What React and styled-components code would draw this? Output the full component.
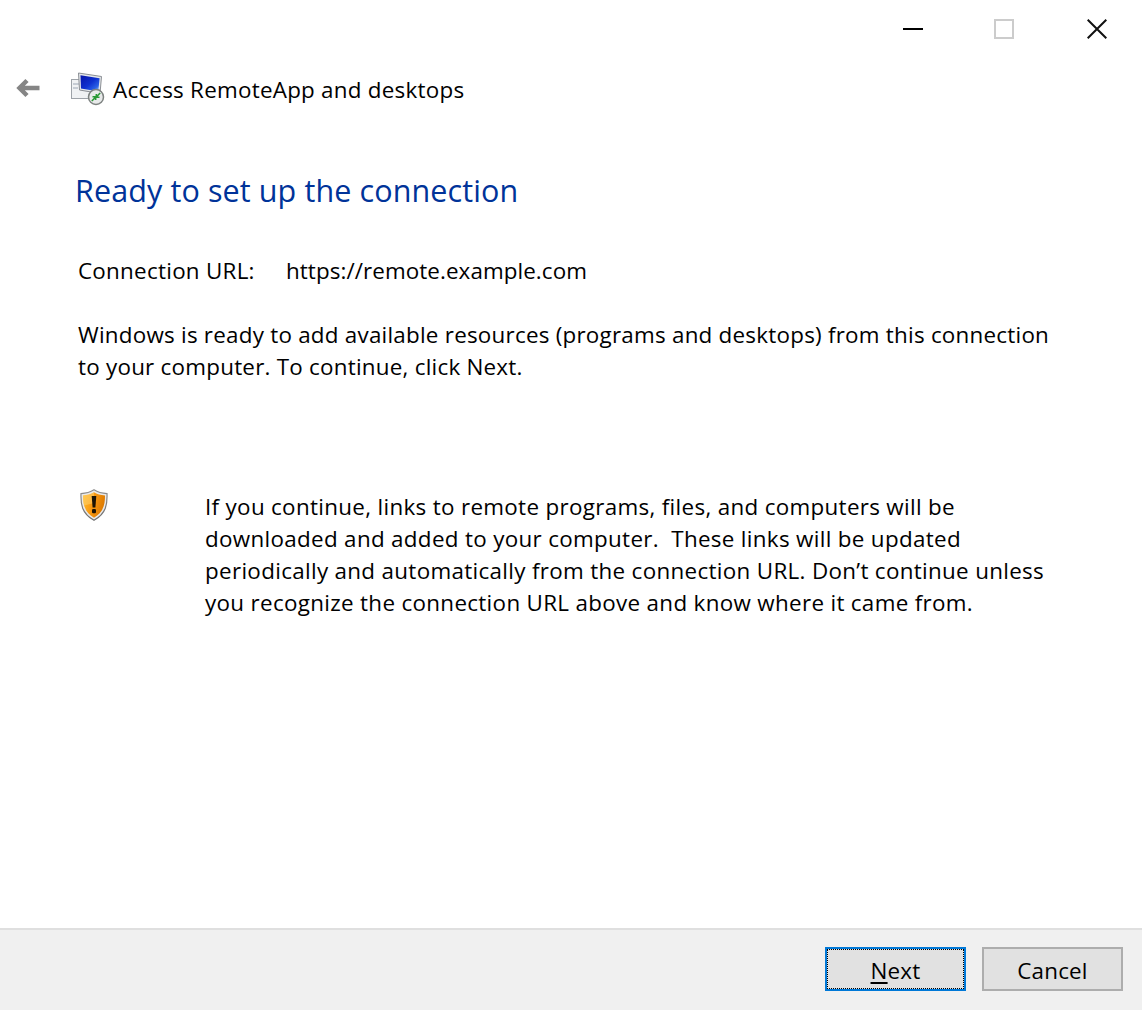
import React from "react";
import styled, { createGlobalStyle } from "styled-components";

const Global = createGlobalStyle`
  html, body { margin: 0; padding: 0; background: #fff; }
  body { font-family: "Open Sans", "Noto Sans", "Liberation Sans", sans-serif; color: #000; }
`;
const Win = styled.div`
  width: 1142px; height: 1010px; display: flex; flex-direction: column; background: #fff; overflow: hidden;
`;
const TitleBar = styled.div`
  height: 60px; display: flex; justify-content: flex-end; align-items: flex-start; padding: 19px 35px 0 0; box-sizing: border-box;
`;
const Caption = styled.svg`
  width: 20px; height: 20px; display: block; flex: none; margin-left: ${p => p.$gap || 0}px;
`;
const NavRow = styled.div`
  height: 60px; display: flex; align-items: center; padding-left: 16px;
`;
const NavTitle = styled.span`
  font-size: 22.4px; letter-spacing: 0.25px; line-height: 30px; margin-left: 7px; color: #000;
`;
const Body = styled.main`
  flex: 1; padding: 51px 0 0 76px; display: flex; flex-direction: column;
`;
const Heading = styled.h1`
  margin: 0 0 0 -1px; font-weight: 400; font-size: 30.5px; letter-spacing: 0.11px; line-height: 38px; color: #003399;
`;
const UrlRow = styled.div`
  margin: 46px 0 0 2px; display: flex; font-size: 22.4px; line-height: 32px;
`;
const UrlLabel = styled.span`
  width: 208px; letter-spacing: 0.27px;
`;
const UrlValue = styled.span`
  letter-spacing: 0.08px;
`;
const Para = styled.p`
  margin: 32px 0 0 2px; width: 990px; font-size: 22.4px; letter-spacing: 0.24px; line-height: 32px;
`;
const Notice = styled.div`
  margin: 108px 0 0 4px; display: flex;
`;
const ShieldIcon = styled.svg`
  width: 28px; height: 32px; flex: none; margin-top: -2px;
`;
const NoticeText = styled.p`
  margin: 0 0 0 97px; width: 850px; font-size: 22.4px; letter-spacing: 0.32px; line-height: 32px; white-space: pre-wrap;
`;
const Footer = styled.footer`
  height: 82px; box-sizing: border-box; flex: none; background: #f0f0f0; border-top: 2px solid #dfdfdf; display: flex; justify-content: flex-end; align-items: flex-start; gap: 16px; padding: 17px 19px 0 0;
`;
const Button = styled.button`
  width: 141px; height: 44px; box-sizing: border-box; background: #e1e1e1; color: #000; font: inherit; font-size: 22.4px; letter-spacing: 0.2px; padding: 3px 0 0; position: relative;
  border: ${p => (p.$primary ? "2px solid #0078d7" : "2px solid #adadad")};
  ${p => p.$primary ? "outline: 1px dotted #000; outline-offset: -3px;" : ""}
  u { text-underline-offset: 3px; }
`;

const Shield = () => (
  <ShieldIcon viewBox="0 0 28 32">
    <defs>
      <linearGradient id="sg" x1="0" y1="0" x2="1" y2="0.3">
        <stop offset="0" stopColor="#ffbe30" />
        <stop offset="0.5" stopColor="#f99a12" />
        <stop offset="1" stopColor="#dd7a02" />
      </linearGradient>
      <linearGradient id="ss" x1="0" y1="0" x2="0" y2="1">
        <stop offset="0" stopColor="#8f8f8f" />
        <stop offset="1" stopColor="#6f6f6f" />
      </linearGradient>
    </defs>
    <path d="M14 .8C10 3.400 6 4.400 1 4.600c-.4 10 .6 20 13 26.600C26.400 24.600 27.400 14.600 27 4.600 22 4.400 18 3.400 14 .8Z" fill="#e9e9e9" stroke="url(#ss)" strokeWidth="1.200" />
    <path d="M14 3.200C11 5 7.500 6 3 6.400c0 8.200 1 16.400 11 22.400 10-6 11-14.200 11-22.400C20.500 6 17 5 14 3.200Z" fill="url(#sg)" />
    <path d="M14 3.200C11 5 7.500 6 3 6.400c0 3.500.2 7 1.300 10.200L14 14Z" fill="#ffd676" opacity=".5" />
    <path d="M11.700 7h4.600l-.9 11.500h-2.800Z" fill="#1a1204" />
    <rect x="12" y="20" width="4" height="4.200" rx="1.200" fill="#1a1204" />
  </ShieldIcon>
);

const AppIcon = styled.svg`
  width: 36px; height: 36px; flex: none; margin-left: 30px;
`;
const Back = styled.svg`
  width: 24px; height: 20px; flex: none; margin-top: -4px;
`;

export default function App() {
  return (
    <Win>
      <Global />
      <TitleBar>
        <Caption viewBox="0 0 20 20"><rect x="0" y="9" width="20" height="2" fill="#000" /></Caption>
        <Caption $gap={71} viewBox="0 0 20 20"><rect x="1" y="1" width="18" height="18" fill="none" stroke="#cccccc" strokeWidth="2" /></Caption>
        <Caption $gap={73} viewBox="0 0 20 20"><path d="M.7.7 19.300 19.300M19.300.7.7 19.300" stroke="#111" strokeWidth="2" fill="none" /></Caption>
      </TitleBar>
      <NavRow>
        <Back viewBox="0 0 24 20"><path d="M23.500 10H4M11 2.500 3.500 10l7.500 7.500" fill="none" stroke="#858585" strokeWidth="4.500" /></Back>
        <AppIcon viewBox="0 0 36 36">
          <defs>
            <linearGradient id="scr" x1="0" y1="0" x2="1" y2="1">
              <stop offset="0" stopColor="#0614a8" />
              <stop offset=".5" stopColor="#0e30d0" />
              <stop offset=".78" stopColor="#2a62e6" />
              <stop offset="1" stopColor="#b4dcf8" />
            </linearGradient>
          </defs>
          <rect x="1.500" y="7.500" width="19" height="19" fill="#f0f2f4" stroke="#9ea3a9" />
          <path d="M3 11h6v2H3zM3 15h5v2H3z" fill="#c6ccd4" />
          <path d="M8.500 1 31.500 4.500l-1.500 17-20.500-3.500Z" fill="#e4e7ea" stroke="#8b8f95" />
          <path d="M10.500 3.300 29.600 6.200l-1.300 13.400L11 16.600Z" fill="url(#scr)" />
          <circle cx="26" cy="25" r="7.500" fill="#e8eaea" stroke="#7d8280" strokeWidth="1.500" />
          <path d="M21.800 29l3.400-3.400M22.500 24.800h3.200v3.200M30.200 21l-3.400 3.400M29.500 25.200h-3.200V22" fill="none" stroke="#2a9a36" strokeWidth="1.500" />
        </AppIcon>
        <NavTitle>Access RemoteApp and desktops</NavTitle>
      </NavRow>
      <Body>
        <Heading>Ready to set up the connection</Heading>
        <UrlRow><UrlLabel>Connection URL:</UrlLabel><UrlValue>https://remote.example.com</UrlValue></UrlRow>
        <Para>Windows is ready to add available resources (programs and desktops) from this connection to your computer. To continue, click Next.</Para>
        <Notice>
          <Shield />
          <NoticeText>{"If you continue, links to remote programs, files, and computers will be downloaded and added to your computer.  These links will be updated periodically and automatically from the connection URL. Don’t continue unless you recognize the connection URL above and know where it came from."}</NoticeText>
        </Notice>
      </Body>
      <Footer>
        <Button $primary><u>N</u>ext</Button>
        <Button>Cancel</Button>
      </Footer>
    </Win>
  );
}
